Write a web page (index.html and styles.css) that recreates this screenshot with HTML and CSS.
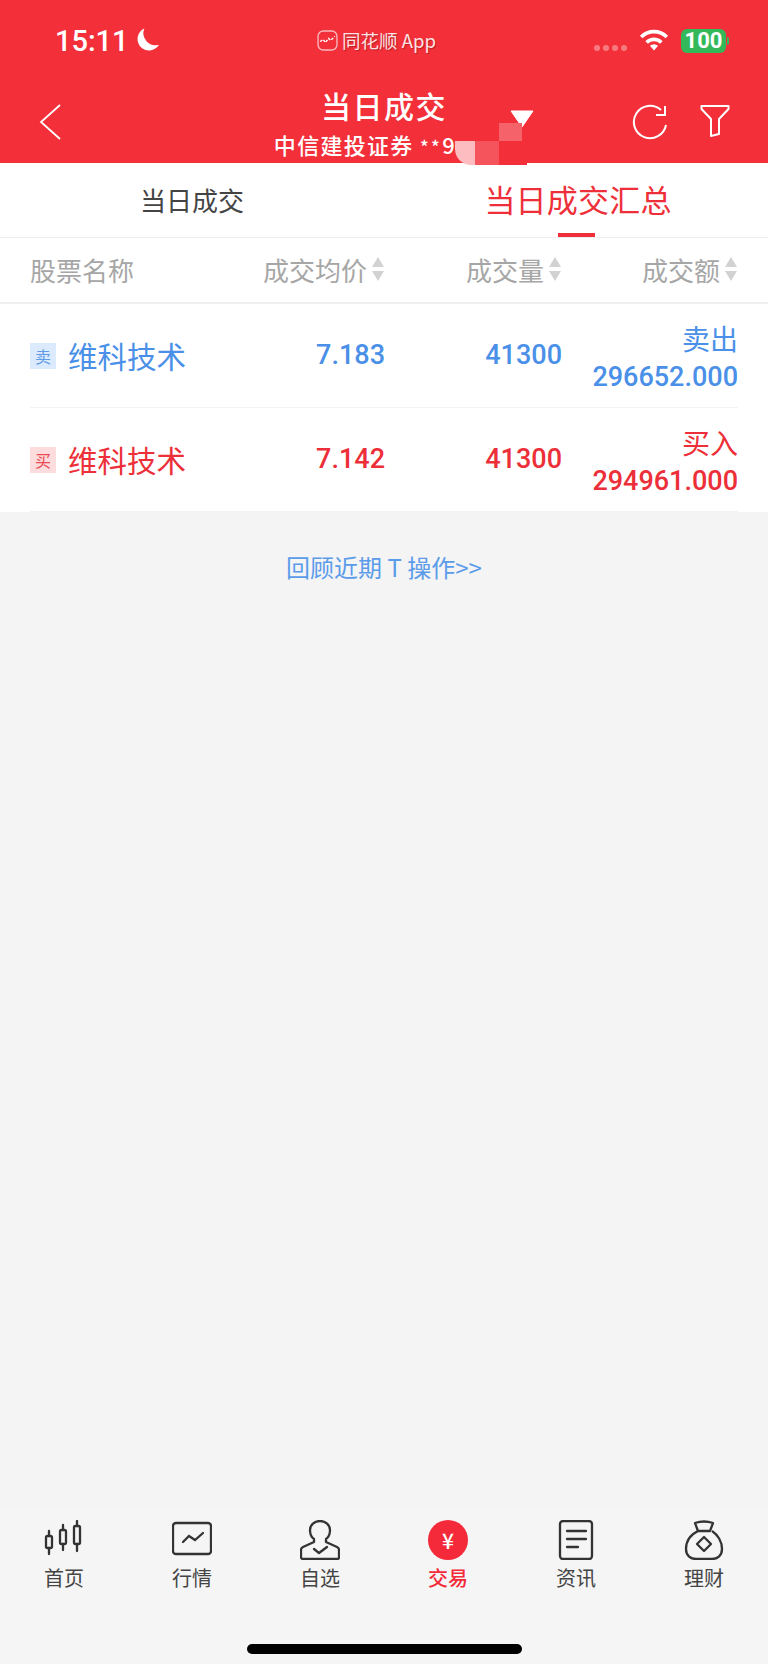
FILE: index.html
```html
<!DOCTYPE html>
<html lang="zh">
<head>
<meta charset="utf-8">
<title>当日成交</title>
<link rel="stylesheet" href="styles.css">
</head>
<body>
<div class="app">
  <header class="top">
    <div class="status">
      <div class="status-left">
        <span class="time">15:11</span>
        <svg class="moon" viewBox="0 0 24 24"><path d="M9 1.5A11 11 0 1 0 23 17 11.500 11.500 0 0 1 9 1.500Z" fill="#fff"/></svg>
      </div>
      <div class="status-mid">
        <svg class="applogo" viewBox="0 0 20 20"><rect x="1" y="1" width="18" height="18" rx="5" fill="none" stroke="#f9b9bd" stroke-width="1.300"/><path d="M3 11l3-2 2 3 3-4 2 2 4-4" fill="none" stroke="#fff" stroke-width="1.300" stroke-dasharray="2.500 1.500"/></svg>
        <span class="appname">同花顺 App</span>
      </div>
      <div class="status-right">
        <div class="dots"><i></i><i></i><i></i><i></i></div>
        <svg class="wifi" viewBox="0 0 24 18"><path d="M1.500 6.500a15 15 0 0 1 21 0" fill="none" stroke="#fff" stroke-width="3"/><path d="M6 11a8.500 8.500 0 0 1 12 0" fill="none" stroke="#fff" stroke-width="3"/><path d="M12 17.500l-3.300-3.700a4.600 4.600 0 0 1 6.600 0Z" fill="#fff"/></svg>
        <div class="battery">100</div>
      </div>
    </div>
    <div class="nav">
      <svg class="back" viewBox="0 0 22 38"><path d="M21 2 2 19l19 17" fill="none" stroke="#fff" stroke-width="1.800"/></svg>
      <div class="nav-title">
        <div class="title">当日成交</div>
        <div class="sub">中信建投证券 <span class="stars">**</span>9</div>
      </div>
      <div class="nav-actions">
        <svg class="refresh" viewBox="0 0 36 36"><path d="M34 21A16.200 16.200 0 1 1 29 6" fill="none" stroke="#fff" stroke-width="2"/><path d="M33 2v9h-9" fill="none" stroke="#fff" stroke-width="2"/></svg>
        <svg class="filter" viewBox="0 0 30 34"><path d="M1.500 2h27v3L19 15v15l-8 2V15L1.500 5Z" fill="none" stroke="#fff" stroke-width="2" stroke-linejoin="round"/></svg>
      </div>
    </div>
    <div class="mosaic">
      <svg class="caret" viewBox="0 0 24 18"><path d="M1 1h22L12 17Z" fill="#fff" stroke="#fff" stroke-linejoin="round"/></svg>
      <i class="m m1"></i><i class="m m2"></i><i class="m m3"></i><i class="m m4"></i>
    </div>
  </header>

  <nav class="tabs">
    <div class="tab">当日成交</div>
    <div class="tab active">当日成交汇总</div>
  </nav>

  <div class="thead">
    <div class="c-name">股票名称</div>
    <div class="c-num c-price">成交均价<span class="sort"></span></div>
    <div class="c-num c-vol">成交量<span class="sort"></span></div>
    <div class="c-num c-amt">成交额<span class="sort"></span></div>
  </div>

  <div class="rows">
    <div class="row sell">
      <div class="c-name"><span class="tag">卖</span><span class="stock">维科技术</span></div>
      <div class="c-num c-price val">7.183</div>
      <div class="c-num c-vol val">41300</div>
      <div class="c-num c-amt amt"><span class="dir">卖出</span><span class="val">296652.000</span></div>
    </div>
    <div class="row buy">
      <div class="c-name"><span class="tag">买</span><span class="stock">维科技术</span></div>
      <div class="c-num c-price val">7.142</div>
      <div class="c-num c-vol val">41300</div>
      <div class="c-num c-amt amt"><span class="dir">买入</span><span class="val">294961.000</span></div>
    </div>
  </div>

  <main class="content">
    <div class="review">回顾近期 T 操作&gt;&gt;</div>
  </main>

  <footer class="tabbar">
    <div class="items">
      <div class="item">
        <svg viewBox="0 0 40 40"><g fill="none" stroke="#333" stroke-width="2.300" stroke-linecap="round"><rect x="2" y="16" width="6" height="12" rx="1.500"/><path d="M5 11v5M5 28v6"/><rect x="16" y="10" width="6" height="14" rx="1.500"/><path d="M19 5v5M19 24v6"/><rect x="30" y="6" width="6" height="18" rx="1.500"/><path d="M33 1v5M33 24v7"/></g></svg>
        <span>首页</span>
      </div>
      <div class="item">
        <svg viewBox="0 0 40 40"><g fill="none" stroke="#333" stroke-width="2.300" stroke-linecap="round"><rect x="1" y="3" width="38" height="31" rx="3"/><path d="M11 22l6-6 6 4 8-7"/></g></svg>
        <span>行情</span>
      </div>
      <div class="item">
        <svg viewBox="0 0 40 40"><g fill="none" stroke="#333" stroke-width="2.300" stroke-linecap="round" stroke-linejoin="round"><path d="M14 22v-3c-3-2-4-5-4-9a10 9 0 0 1 20 0c0 4-1 7-4 9v3l11 5c1 .5 2 1.500 2 3v7a2 2 0 0 1-2 2H3a2 2 0 0 1-2-2v-7c0-1.500 1-2.500 2-3Z"/><path d="M14 29l5 4 8-6"/></g></svg>
        <span>自选</span>
      </div>
      <div class="item active">
        <div class="yen">¥</div>
        <span>交易</span>
      </div>
      <div class="item">
        <svg viewBox="0 0 40 40"><g fill="none" stroke="#333" stroke-width="2.300" stroke-linecap="round"><rect x="4" y="1" width="32" height="38" rx="3"/><path d="M11 11h19M11 19h19M11 27h11"/></g></svg>
        <span>资讯</span>
      </div>
      <div class="item">
        <svg viewBox="0 0 40 40"><g fill="none" stroke="#333" stroke-width="2.300" stroke-linejoin="round"><path d="M11 3c6-2 12-2 18 0l-3 8H14Z"/><path d="M14 11C6 15 2 22 2 29c0 7 5 10 10 10h16c5 0 10-3 10-10 0-7-4-14-10-18"/><path d="M20 17l7 7-7 7-7-7Z"/></g></svg>
        <span>理财</span>
      </div>
    </div>
    <div class="home"></div>
  </footer>
</div>
</body>
</html>
```
FILE: styles.css
```css
* { box-sizing: border-box; }
html, body { margin: 0; padding: 0; }
body {
  width: 768px;
  height: 1664px;
  overflow: hidden;
  background: #f4f4f4;
  font-family: "Noto Sans CJK SC", "Noto Sans", sans-serif;
}
.app { width: 768px; height: 1664px; display: flex; flex-direction: column; }

.top { position: relative; height: 163px; background: #f3303a; color: #fff; flex: none; }
.status { height: 82px; padding: 22px 42px 0 55px; display: grid; grid-template-columns: 1fr auto 1fr; align-items: start; }
.status-left { display: flex; align-items: center; gap: 6px; height: 38px; }
.time { font: 500 29px/38px Roboto, sans-serif; }
.moon { width: 25px; height: 25px; margin-top: -3px; }
.status-mid { display: flex; align-items: center; gap: 4px; height: 36px; margin-right: 28px; }
.applogo { width: 21px; height: 21px; }
.appname { font-size: 18.500px; color: #fbe3e4; text-shadow: 1px 1px 1px rgba(120,0,0,.45); white-space: nowrap; }
.status-right { display: flex; justify-content: flex-end; align-items: center; height: 38px; }
.dots { display: flex; gap: 3px; margin: 13px 12px 0 0; }
.dots i { width: 6px; height: 6px; border-radius: 50%; background: #f77a80; }
.wifi { width: 30px; height: 22px; margin: -2px 12px 0 0; }
.battery { position: relative; width: 45px; height: 24px; border-radius: 6px; background: #33b85a; color: #fff; font: 700 22px/24px Roboto, sans-serif; text-align: center; }
.battery::after { content: ""; position: absolute; left: 46px; top: 8px; width: 2px; height: 8px; border-radius: 0 2px 2px 0; background: #33b85a; }

.nav { height: 81px; padding: 0 38px 0 38px; display: grid; grid-template-columns: 1fr auto 1fr; }
.back { width: 24px; height: 38px; margin-top: 21px; }
.nav-title { text-align: center; margin-top: 4px; }
.title { font-size: 30px; line-height: 38px; font-weight: 500; letter-spacing: 1.500px; }
.sub { font-size: 22px; font-weight: 500; line-height: 32px; margin-top: 4px; letter-spacing: 1.300px; padding-right: 38px; white-space: nowrap; }
.stars { font-size: 18px; letter-spacing: 2.500px; }
.nav-actions { display: flex; justify-content: flex-end; gap: 32px; padding-top: 22px; }
.refresh { width: 36px; height: 36px; }
.filter { width: 30px; height: 34px; }
.mosaic { position: absolute; left: 455px; top: 107px; width: 80px; height: 60px; }
.caret { position: absolute; left: 55px; top: 3px; width: 24px; height: 18px; }
.m { position: absolute; display: block; }
.m1 { left: 0; top: 34px; width: 20px; height: 24px; background: #fcbcc0; border-bottom-left-radius: 16px; }
.m2 { left: 20px; top: 34px; width: 24px; height: 24px; background: #f5545c; }
.m3 { left: 44px; top: 16px; width: 23px; height: 18px; background: #f6626a; }
.m4 { left: 44px; top: 34px; width: 28px; height: 24px; background: #f3303a; }

.tabs { height: 75px; background: #fff; display: grid; grid-template-columns: 1fr 1fr; flex: none; border-bottom: 1px solid #eeeeee; }
.tab { position: relative; text-align: center; font-size: 26px; line-height: 74px; color: #444; }
.tab.active { color: #ee2f39; font-size: 31px; line-height: 72px; letter-spacing: .2px; padding-left: 4px; }
.tab.active::after { content: ""; position: absolute; left: 174px; top: 70px; width: 37px; height: 4px; background: #ee2f39; }

.thead, .row { display: grid; grid-template-columns: 177px 178px 177px 176px; padding: 0 30px; align-items: center; }
.thead { height: 66px; padding-bottom: 2px; background: #fff; color: #a6a6a6; font-size: 26px; border-bottom: 2px solid #f0f0f0; flex: none; }
.c-num { text-align: right; }
.thead .c-num { display: flex; justify-content: flex-end; align-items: center; white-space: nowrap; }
.thead .c-name { white-space: nowrap; }
.sort { display: inline-block; width: 13px; height: 24px; margin-left: 5px; position: relative; flex: none; }
.sort::before, .sort::after { content: ""; position: absolute; left: 0; border-left: 6.500px solid transparent; border-right: 6.500px solid transparent; }
.sort::before { top: 0; border-bottom: 10px solid #d2d2d2; }
.sort::after { bottom: 0; border-top: 10px solid #d2d2d2; }

.rows { background: #fff; flex: none; }
.row { height: 104px; position: relative; }
.row::after { content: ""; position: absolute; left: 30px; right: 30px; bottom: 0; height: 1px; background: #f3f3f3; }
.sell { color: #4a90e8; }
.buy { color: #ec2f38; }
.row .c-name { display: flex; align-items: center; gap: 12px; white-space: nowrap; padding-bottom: 3px; }
.tag { width: 26px; height: 26px; font-size: 16px; line-height: 26px; text-align: center; flex: none; margin-top: 2px; }
.sell .tag { background: #dceafd; color: #5f9be8; }
.buy .tag { background: #fddcdd; color: #ec4a52; }
.stock { font-size: 29.500px; line-height: 40px; }
.val { font: 500 27px/36px Roboto, sans-serif; }
.row > .val { padding-bottom: 2px; }
.amt { display: flex; flex-direction: column; align-items: flex-end; padding-top: 2px; padding-left: 0; }
.dir { font-size: 28px; line-height: 38px; }
.amt .val { line-height: 38px; margin-top: 1px; }

.content { flex: 1; background: #f4f4f4; text-align: center; padding-top: 37px; }
.review { color: #5a9bea; font-size: 24px; line-height: 36px; }

.tabbar { flex: none; height: 154px; background: #f5f5f5; display: flex; flex-direction: column; }
.items { display: grid; grid-template-columns: repeat(6, 1fr); padding: 10px 0 0 0; height: 130px; }
.item { display: flex; flex-direction: column; align-items: center; color: #444; font-size: 20px; line-height: 28px; }
.item svg, .yen { width: 40px; height: 40px; margin-bottom: 4px; }
.item.active { color: #f42a3a; font-weight: 500; }
.yen { border-radius: 50%; background: #f42a3a; color: #fff; text-align: center; font: 500 21px/40px "Noto Sans CJK SC", sans-serif; }
.home { width: 275px; height: 10px; border-radius: 5px; background: #000; margin: 4px auto 0; }
```
